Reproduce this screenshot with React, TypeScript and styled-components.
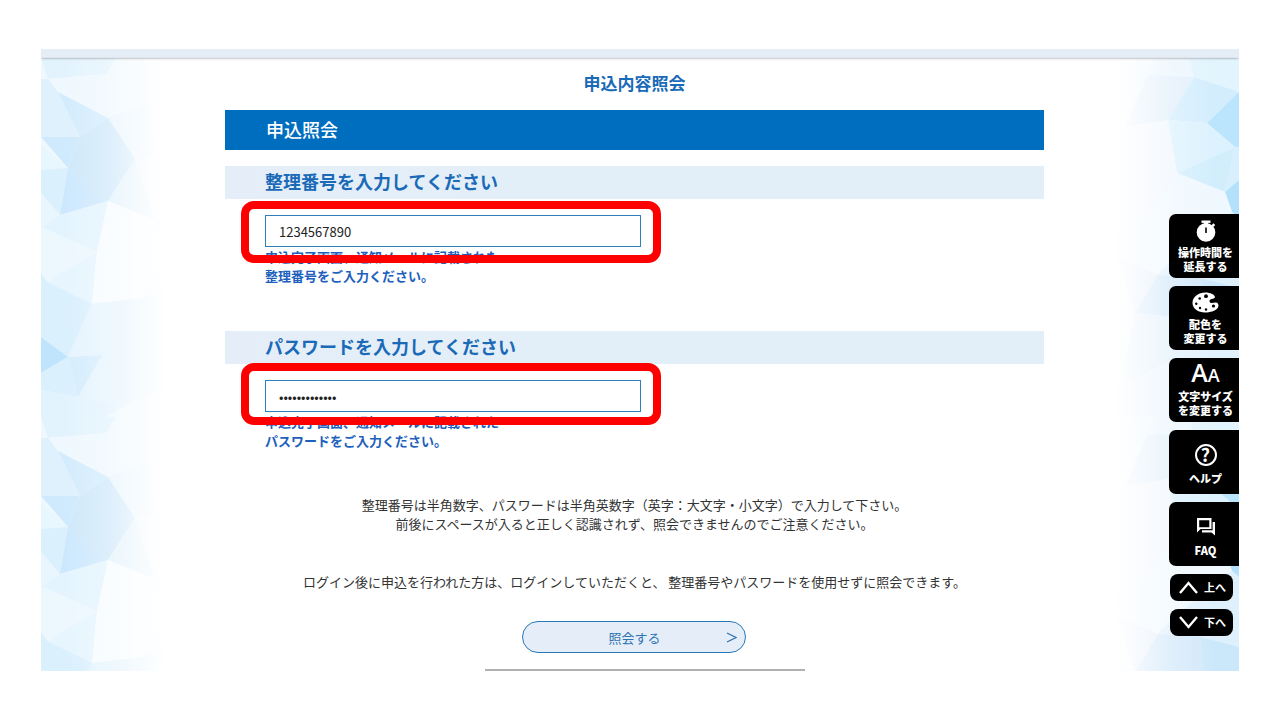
import React from 'react';
import styled, { createGlobalStyle } from 'styled-components';

const GlobalStyle = createGlobalStyle`
  *, *::before, *::after { box-sizing: border-box; }
  body {
    margin: 0;
    background: #fff;
    color: #333;
    font-family: "Noto Sans CJK JP", "Noto Sans", sans-serif;
    font-size: 13px;
    line-height: 19px;
  }
  h1, h2, p { margin: 0; }
  button, input { font: inherit; }
`;

const Page = styled.div`
  padding: 49px 41px;
`;

const HeaderStrip = styled.header`
  height: 9px;
  background: #e5eef7;
  border-bottom: 1px solid #dde4ec;
  box-shadow: 0 2px 2px -1px rgba(0, 0, 0, 0.22);
`;

const Stage = styled.div`
  position: relative;
  overflow: hidden;
`;

const Facets = styled.svg<{ $side: 'left' | 'right' }>`
  position: absolute;
  top: 0;
  ${(p) => p.$side}: 0;
  z-index: -1;
`;

const Main = styled.main`
  padding: 13px 11px 16px 0;
  display: flex;
  flex-direction: column;
  align-items: center;
`;

const PageTitle = styled.h1`
  font-size: 17px;
  line-height: 24px;
  font-weight: 700;
  color: #1a6ab8;
`;

const Form = styled.form`
  width: 69%;
  margin-top: 15px;
  display: flex;
  flex-direction: column;
`;

const Banner = styled.h2`
  padding: 0 41px 2px;
  background: #006ebe;
  color: #fff;
  font-size: 18px;
  line-height: 38px;
  font-weight: 500;
`;

const Section = styled.section<{ $gap: number }>`
  margin-top: ${(p) => p.$gap}px;
`;

const FieldHeading = styled.h2`
  padding: 0 40px 2px;
  margin-bottom: 16px;
  background: linear-gradient(90deg, #e5eef8, #e2eff8 50%);
  color: #1a6ab8;
  font-size: 18px;
  line-height: 31px;
  font-weight: 700;
`;

const FieldBody = styled.div`
  padding: 0 40px;
`;

const InputWrap = styled.div`
  position: relative;
  width: 100%;
  max-width: 376px;
`;

const TextInput = styled.input`
  display: block;
  width: 100%;
  height: 32px;
  padding: 0 13px;
  border: 1px solid #2f7fbc;
  border-radius: 0;
  background: #fff;
  color: #222;
  outline: none;
`;

const Highlight = styled.span<{ $top: number; $bottom: number }>`
  position: absolute;
  top: -${(p) => p.$top}px;
  bottom: -${(p) => p.$bottom}px;
  left: -24px;
  right: -20px;
  border: 8px solid #fe0000;
  border-radius: 13px;
  pointer-events: none;
`;

const Note = styled.p`
  color: #2060bd;
  font-weight: 700;
`;

const Guidance = styled.div`
  margin-top: 45px;
  display: flex;
  flex-direction: column;
  gap: 39px;
  text-align: center;
`;

const SubmitButton = styled.button`
  align-self: center;
  display: grid;
  grid-template-columns: 1fr auto 1fr;
  align-items: center;
  width: 224px;
  height: 32px;
  margin-top: 30px;
  padding: 0 8px;
  border: 1px solid #2878b8;
  border-radius: 16px;
  background: #e5eef8;
  color: #2f74b3;
  cursor: pointer;
`;

const SubmitLabel = styled.span`
  grid-column: 2;
`;

const SubmitArrow = styled.svg`
  justify-self: end;
`;

const DividerRow = styled.div`
  display: flex;
  justify-content: center;
  padding-left: 10px;
`;

const Divider = styled.hr`
  width: 27%;
  height: 2px;
  margin: 0;
  border: 0;
  background: #b0b0b0;
`;

const SideNav = styled.nav`
  position: absolute;
  top: 156px;
  right: 0;
  display: flex;
  flex-direction: column;
  gap: 8px;
  width: 70px;
`;

const ToolButton = styled.button<{ $single?: boolean }>`
  display: flex;
  flex-direction: column;
  align-items: center;
  justify-content: center;
  height: 64px;
  padding: ${(p) => (p.$single ? '3px 0 0 3px' : '0 0 1px 3px')};
  border: 0;
  border-radius: 7px 0 0 7px;
  background: #000;
  color: #fff;
  font-size: 11px;
  line-height: 14px;
  font-weight: 900;
  cursor: pointer;
`;

const IconSlot = styled.span<{ $gap?: number }>`
  display: flex;
  align-items: center;
  justify-content: center;
  height: 24px;
  margin-bottom: ${(p) => p.$gap ?? 2}px;
`;

const ScrollButton = styled.button`
  display: flex;
  align-items: center;
  justify-content: center;
  gap: 6px;
  width: 63px;
  height: 27px;
  margin-left: 1px;
  padding: 0 0 1px 2px;
  border: 0;
  border-radius: 8px;
  background: #000;
  color: #fff;
  font-size: 11px;
  line-height: 16px;
  font-weight: 700;
  cursor: pointer;
`;

const LetterSizes = styled.span`
  font-family: "Open Sans", sans-serif;
  font-weight: 600;
  line-height: 24px;
`;

const Letter = styled.span<{ $size: number }>`
  font-size: ${(p) => p.$size}px;
`;

const HelpMark = styled.span`
  width: 22px;
  height: 22px;
  border: 2px solid #fff;
  border-radius: 50%;
  font-size: 18px;
  line-height: 17px;
  font-weight: 700;
  text-align: center;
`;

type Facet = [points: string, fill: string];

const TILE_HEIGHT = 359;

const leftFacets: Facet[] = [
  ['0,0 75,0 65,16 7,21', '#e3f3fd'],
  ['75,0 125,0 110,44 67,60 17,34 7,21 65,16', '#eff8fe'],
  ['0,21 7,21 17,34 39,79 0,79', '#dff1fd'],
  ['17,34 67,60 39,79', '#d3ecfd'],
  ['67,60 110,44 115,100 94,101', '#e9f5fd'],
  ['39,79 67,60 94,101 67,143 27,110', '#cfe8fa'],
  ['0,79 39,79 27,110', '#cfeafc'],
  ['0,86 27,110 0,112', '#e8f6fe'],
  ['0,112 27,110 19,157 0,135', '#daf0fd'],
  ['0,135 19,157 0,169', '#eaf6fe'],
  ['27,110 67,143 19,157', '#cdE8fd'],
  ['67,143 94,101 114,162', '#e2f2fc'],
  ['0,169 19,157 67,143 56,194', '#e4f4fe'],
  ['0,169 56,194 6,224 0,215', '#edf7fe'],
  ['56,194 51,246 6,224', '#e6f5fe'],
  ['56,194 67,143 114,162 125,200 102,240 51,246', '#f7fcff'],
  ['0,215 6,224 51,246 27,299 0,279', '#daf0fd'],
  ['51,246 102,240 125,230 125,330 84,347 37,339 61,297 27,299', '#e6f4fe'],
  ['0,279 27,299 0,315', '#bfe4fb'],
  ['0,315 27,299 37,339 0,332', '#daf0fd'],
  ['27,299 61,297 37,339', '#d5edfd'],
  ['0,332 37,339 84,347 65,359 0,359', '#e3f3fe'],
];

const rightFacets: Facet[] = [
  ['40,0 75,0 80,19 34,17', '#eaf6fe'],
  ['75,0 125,0 125,34 80,19', '#e2f4fd'],
  ['80,19 125,34 93,65 54,62', '#d3edfd'],
  ['125,34 125,89 121,89 93,65', '#bbe5fd'],
  ['34,17 80,19 54,62 11,69', '#e2effb'],
  ['54,62 93,65 121,89 63,115', '#dcf2fe'],
  ['121,89 111,134 63,115', '#d2eefd'],
  ['121,89 125,89 125,122 111,134', '#d8f0fd'],
  ['111,134 125,122 125,160 118,154', '#b3e1fb'],
  ['11,69 54,62 63,115 3,199', '#f1f6fd'],
  ['63,115 111,134 118,154 60,200 44,217 3,199', '#eff8fe'],
  ['118,154 125,160 125,230 44,217 60,200', '#dff0fd'],
  ['3,199 44,217 21,255', '#e6f0fb'],
  ['44,217 86,220 90,262 21,255', '#d3e8fa'],
  ['86,220 125,230 125,270 90,262', '#cbe8fa'],
  ['21,255 90,262 60,300 5,330', '#e4f0fc'],
  ['90,262 125,270 125,359 60,359 60,300', '#e2f2fd'],
  ['5,330 60,300 60,359 0,359', '#eaf4fe'],
];

function FacetStrip({ side, facets }: { side: 'left' | 'right'; facets: Facet[] }) {
  const isLeft = side === 'left';
  return (
    <Facets $side={side} width="125" height="1077" viewBox="0 0 125 1077" aria-hidden="true">
      <defs>
        <linearGradient id={`fade-${side}`} x1={isLeft ? 0 : 1} x2={isLeft ? 1 : 0} y1="0" y2="0">
          <stop offset="0.2" stopColor="#fff" stopOpacity="0" />
          <stop offset="0.55" stopColor="#fff" stopOpacity="0.3" />
          <stop offset="1" stopColor="#fff" stopOpacity="1" />
        </linearGradient>
      </defs>
      <rect width="125" height="1077" fill="#eff8fe" />
      {[0, 1, 2].map((tile) => (
        <g key={tile} transform={`translate(0 ${tile * TILE_HEIGHT})`}>
          {facets.map(([points, fill]) => (
            <polygon key={points} points={points} fill={fill} />
          ))}
        </g>
      ))}
      <rect width="125" height="1077" fill={`url(#fade-${side})`} />
    </Facets>
  );
}

function StopwatchIcon() {
  return (
    <svg width="20" height="22" viewBox="0 0 20 22" aria-hidden="true">
      <rect x="5.5" y="0.5" width="9" height="2.4" fill="#fff" />
      <rect x="8" y="2" width="4" height="3" fill="#fff" />
      <circle cx="10" cy="12.4" r="9.3" fill="#fff" />
      <path d="M15.6 5.2 17.3 3.3l1.9 1.8-1.8 1.8z" fill="#fff" />
      <path d="M10 7.5v5.4" stroke="#000" strokeWidth="1.6" />
    </svg>
  );
}

function PaletteIcon() {
  return (
    <svg width="27" height="21" viewBox="0 0 27 21" aria-hidden="true">
      <path
        d="M13.5.5C6.3.5.5 5 .5 11c0 5.500 5.600 9.500 12.500 9.500 5 0 10.500-1.500 12.700-4.500 1.500-2.300.800-5-1.700-5.400-1.800-.300-3 .600-4.800.300-1.900-.300-2.300-2.300-.800-3.300 1.400-.900 3.800-.600 4.500-2C23.500 3 18.500.5 13.500.5z"
        fill="#fff"
      />
      <circle cx="14" cy="4.200" r="1.900" fill="#000" />
      <circle cx="7.700" cy="6.500" r="1.300" fill="#000" />
      <circle cx="4.300" cy="11.700" r="1.200" fill="#000" />
      <circle cx="8" cy="16" r="1.200" fill="#000" />
      <circle cx="14" cy="17.500" r="1.200" fill="#000" />
      <circle cx="21.500" cy="14" r="1.600" fill="#000" />
    </svg>
  );
}

function ChatIcon() {
  return (
    <svg width="18" height="18" viewBox="0 0 18 18" aria-hidden="true">
      <path
        fillRule="evenodd"
        d="M0 0h14.500v11H3.500L0 14.500zM2.200 2.200v7h10.100v-7z"
        fill="#fff"
      />
      <path d="M15.600 4H18v13.500l-3.500-3H5v-2.300h10.600z" fill="#fff" />
    </svg>
  );
}

function ChevronIcon({ up }: { up?: boolean }) {
  return (
    <svg width="19" height="13" viewBox="0 0 19 13" fill="none" stroke="#fff" strokeWidth="2.400" aria-hidden="true">
      <path d={up ? 'M1 12 9.500 2 18 12' : 'M1 1 9.500 11 18 1'} />
    </svg>
  );
}

interface FieldProps {
  id: string;
  heading: string;
  type: 'text' | 'password';
  value: string;
  note: string;
  gap: number;
  highlight: [top: number, bottom: number];
}

function Field({ id, heading, type, value, note, gap, highlight }: FieldProps) {
  return (
    <Section $gap={gap}>
      <FieldHeading>
        <label htmlFor={id}>{heading}</label>
      </FieldHeading>
      <FieldBody>
        <InputWrap>
          <TextInput id={id} type={type} defaultValue={value} autoComplete="off" />
          <Highlight $top={highlight[0]} $bottom={highlight[1]} />
        </InputWrap>
        <Note>
          申込完了画面、通知メールに記載された
          <br />
          {note}
        </Note>
      </FieldBody>
    </Section>
  );
}

export default function App() {
  return (
    <Page>
      <GlobalStyle />
      <HeaderStrip />
      <Stage>
        <FacetStrip side="left" facets={leftFacets} />
        <FacetStrip side="right" facets={rightFacets} />
        <Main>
          <PageTitle>申込内容照会</PageTitle>
          <Form onSubmit={(e) => e.preventDefault()}>
            <Banner>申込照会</Banner>
            <Field
              id="reference-number"
              heading="整理番号を入力してください"
              type="text"
              value="1234567890"
              note="整理番号をご入力ください。"
              gap={16}
              highlight={[14, 16]}
            />
            <Field
              id="password"
              heading="パスワードを入力してください"
              type="password"
              value="abcdefghijklm"
              note="パスワードをご入力ください。"
              gap={46}
              highlight={[17, 13]}
            />
            <Guidance>
              <p>
                整理番号は半角数字、パスワードは半角英数字（英字：大文字・小文字）で入力して下さい。
                <br />
                前後にスペースが入ると正しく認識されず、照会できませんのでご注意ください。
              </p>
              <p>ログイン後に申込を行われた方は、ログインしていただくと、 整理番号やパスワードを使用せずに照会できます。</p>
            </Guidance>
            <SubmitButton type="submit">
              <SubmitLabel>照会する</SubmitLabel>
              <SubmitArrow width="11" height="11" viewBox="0 0 11 11" fill="none" stroke="#2f74b3" strokeWidth="1.300" aria-hidden="true">
                <path d="M1 1 10 5.500 1 10" />
              </SubmitArrow>
            </SubmitButton>
          </Form>
        </Main>
        <DividerRow>
          <Divider />
        </DividerRow>
        <SideNav>
          <ToolButton type="button">
            <IconSlot><StopwatchIcon /></IconSlot>
            <span>操作時間を<br />延長する</span>
          </ToolButton>
          <ToolButton type="button">
            <IconSlot><PaletteIcon /></IconSlot>
            <span>配色を<br />変更する</span>
          </ToolButton>
          <ToolButton type="button">
            <IconSlot>
              <LetterSizes aria-hidden="true">
                <Letter $size={25}>A</Letter>
                <Letter $size={18}>A</Letter>
              </LetterSizes>
            </IconSlot>
            <span>文字サイズ<br />を変更する</span>
          </ToolButton>
          <ToolButton type="button" $single>
            <IconSlot $gap={4}><HelpMark aria-hidden="true">?</HelpMark></IconSlot>
            <span>ヘルプ</span>
          </ToolButton>
          <ToolButton type="button" $single>
            <IconSlot $gap={4}><ChatIcon /></IconSlot>
            <span>FAQ</span>
          </ToolButton>
          <ScrollButton type="button"><ChevronIcon up />上へ</ScrollButton>
          <ScrollButton type="button"><ChevronIcon />下へ</ScrollButton>
        </SideNav>
      </Stage>
    </Page>
  );
}
